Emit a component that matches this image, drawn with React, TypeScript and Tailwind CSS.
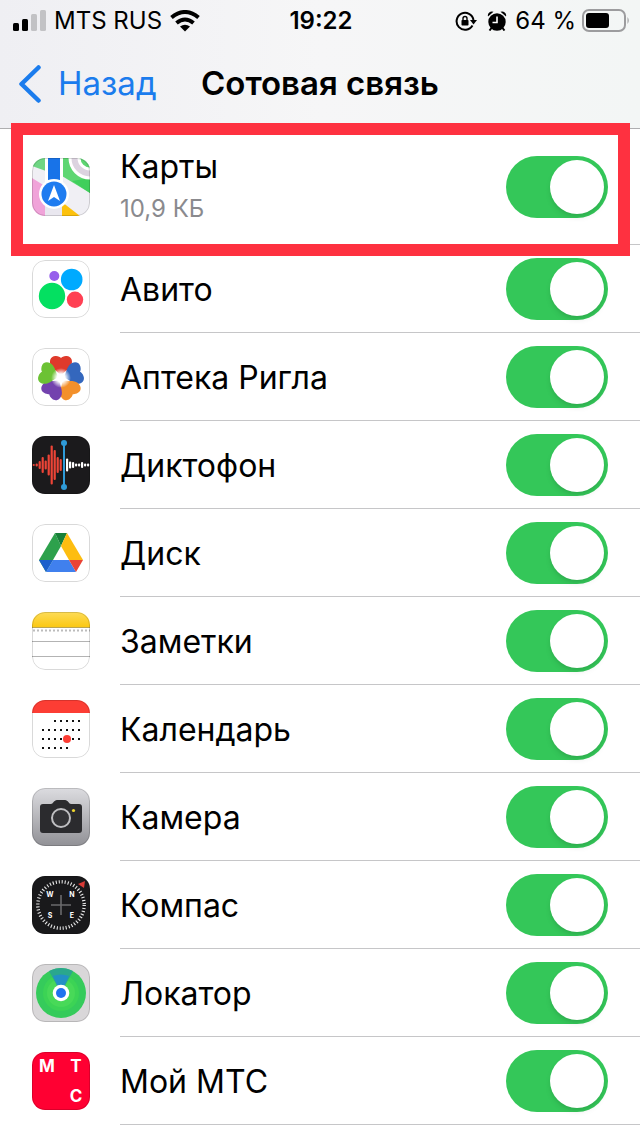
import React, { useState } from "react";

const MapsIcon = () => (
  <>
    <rect width="58" height="58" fill="#f0eff4" />
    <path d="M14 0V13L0 8V0z" fill="#6fd583" />
    <path d="M30 0H58V35L30 18z" fill="#5ed672" />
    <path d="M40 23L58 20V35z" fill="#3fcf5b" />
    <path d="M0 20L13 28V58H0z" fill="#f0a3d9" />
    <path d="M13 40H30V58H13z" fill="#e9e7ef" />
    <path d="M30 44L48 58H30z" fill="#fcc10d" />
    <circle cx="58" cy="0" r="20" fill="#dcd3e0" stroke="#fff" strokeWidth="3" />
    <circle cx="58" cy="0" r="11" fill="#5ed672" stroke="#fff" strokeWidth="3" />
    <path d="M13 0H31V28H13z" fill="#fff" />
    <path d="M16 0H28V26H16z" fill="#1873e8" />
    <circle cx="22" cy="36" r="15" fill="#fff" />
    <circle cx="22" cy="36" r="12.5" fill="#1f7cf0" />
    <path d="M22 27L28 43L22 39L16 43z" fill="#fff" />
  </>
);

const AvitoIcon = () => (
  <>
    <rect width="58" height="58" fill="#fff" />
    <circle cx="22.3" cy="16" r="5" fill="#965eeb" />
    <circle cx="39.7" cy="19.5" r="10.8" fill="#00aaff" />
    <circle cx="20" cy="36" r="13.2" fill="#04e061" />
    <circle cx="43" cy="39.7" r="8.2" fill="#ff4053" />
  </>
);

const petals = ["#df3a2b", "#3467bd", "#f3902b", "#7342ae", "#6cc234"];

const RiglaIcon = () => (
  <>
    <rect width="58" height="58" fill="#fff" />
    {petals.map((color, index) => (
      <path
        key={color}
        d="M0 -3C-3 -6 -7 -8 -9.5 -11.5C-13 -17 -10 -22.5 -5 -22C-2.500 -21.800 -1 -21 0 -20C1 -21 2.500 -21.800 5 -22C10 -22.5 13 -17 9.500 -11.500C7 -8 3 -6 0 -3z"
        fill={color}
        transform={`translate(29 30) rotate(${index * 72})`}
      />
    ))}
    <circle cx="29" cy="30" r="10" fill="url(#glow)" />
    <defs>
      <radialGradient id="glow">
        <stop offset="0.4" stopColor="#fff" />
        <stop offset="1" stopColor="#fff" stopOpacity="0" />
      </radialGradient>
    </defs>
  </>
);

const redBars = [2, 3, 8, 16, 9, 21, 39, 30, 16, 12];
const whiteBars = [13, 7, 6, 3, 3, 6, 3, 3];

const VoiceIcon = () => (
  <>
    <rect width="58" height="58" fill="#1b1a1c" />
    {redBars.map((h, i) => (
      <rect key={i} x={0.6 + i * 3} y={29 - h / 2} width="2.2" height={h} rx="1" fill="#ee4437" />
    ))}
    {whiteBars.map((h, i) => (
      <rect key={i} x={34 + i * 3} y={29 - h / 2} width="2.2" height={h} rx="1" fill="#fff" />
    ))}
    <path d="M32 7V51" stroke="#2f9bd8" strokeWidth="2" />
    <circle cx="32" cy="7" r="3" fill="#2f9bd8" />
    <circle cx="32" cy="51" r="3" fill="#2f9bd8" />
  </>
);

const DriveIcon = () => (
  <>
    <rect width="58" height="58" fill="#fff" />
    <path d="M23 9L29 22L21 36L14 48L7 36z" fill="#2da14c" />
    <path d="M23 9H35L29 22z" fill="#178038" />
    <path d="M35 9L51 36H37L29 22z" fill="#fdbd10" />
    <path d="M7 36H21L14 48z" fill="#1c5fcc" />
    <path d="M21 36H37L44 48H14z" fill="#4080ee" />
    <path d="M37 36H51L44 48z" fill="#ea4335" />
  </>
);

const NotesIcon = () => (
  <>
    <rect width="58" height="58" fill="#fff" />
    <rect width="58" height="15" fill="url(#notes)" />
    <path d="M0 15.5H58" stroke="#b9a553" />
    <path d="M1 18.5H58" stroke="#bcbcbc" strokeWidth="2" strokeDasharray="2 2" />
    <path d="M0 29.5H58M0 44.5H58" stroke="#b3b3b3" />
    <defs>
      <linearGradient id="notes" x2="0" y2="1">
        <stop stopColor="#fddc58" />
        <stop offset="1" stopColor="#fbc812" />
      </linearGradient>
    </defs>
  </>
);

const calendarRows = [
  { y: 21, from: 2, to: 6 },
  { y: 30, from: 0, to: 6 },
  { y: 39, from: 0, to: 6 },
  { y: 48, from: 0, to: 4 },
];

const CalendarIcon = () => (
  <>
    <rect width="58" height="58" fill="#fff" />
    <rect width="58" height="13" fill="#fc3d34" />
    {calendarRows.map((row) =>
      [0, 1, 2, 3, 4, 5, 6]
        .filter((col) => col >= row.from && col <= row.to)
        .map((col) => (
          <rect key={`${row.y}-${col}`} x={10 + col * 6} y={row.y - 1} width="2" height="2" fill="#111" />
        ))
    )}
    <circle cx="35" cy="39" r="4" fill="#fc3d34" />
  </>
);

const CameraIcon = () => (
  <>
    <rect width="58" height="58" fill="url(#camera)" />
    <path
      d="M11 16H19C21 16 22 12 25 12H33C36 12 37 16 39 16H47Q50 16 50 19V42Q50 45 47 45H11Q8 45 8 42V19Q8 16 11 16z"
      fill="#2b2b2e"
    />
    <circle cx="29" cy="30" r="9" fill="#343437" stroke="#bebec1" strokeWidth="2" />
    <circle cx="41.5" cy="22.5" r="1.6" fill="#eed52e" />
    <defs>
      <linearGradient id="camera" x2="0" y2="1">
        <stop stopColor="#dcdce0" />
        <stop offset="1" stopColor="#919196" />
      </linearGradient>
    </defs>
  </>
);

const CompassIcon = () => (
  <>
    <rect width="58" height="58" fill="#19191b" />
    <circle cx="29" cy="29" r="23.2" fill="none" stroke="#e5e5e5" strokeWidth="3.4" strokeDasharray="1.1 1.937" />
    <path d="M29 19V39M19 29H39" stroke="#6a6a6c" strokeWidth="1.6" />
    <path d="M53 5L52 12L46 8z" fill="#d93a36" />
    <g fill="#fff" fontSize="7" fontWeight="700" textAnchor="middle">
      <text x="18" y="21">W</text>
      <text x="40" y="21">N</text>
      <text x="18" y="42">S</text>
      <text x="40" y="42">E</text>
    </g>
  </>
);

const FindIcon = () => (
  <>
    <rect width="58" height="58" fill="#d9d7d9" />
    <circle cx="29" cy="29" r="25" fill="#35cb5b" />
    <circle cx="29" cy="29" r="18" fill="#3cd355" />
    <circle cx="29" cy="29" r="14" fill="#48d958" />
    <path d="M29 29L17 7Q29 1 41 7z" fill="#2aa78d" />
    <path d="M29 29L21 12Q29 9 37 12z" fill="#2290c5" />
    <circle cx="29" cy="29" r="8.3" fill="#fff" />
    <circle cx="29" cy="29" r="5" fill="#1f72ee" />
  </>
);

const MtsIcon = () => (
  <>
    <rect width="58" height="58" fill="#ff0032" />
    <g fill="#fff" fontSize="17" fontWeight="700" textAnchor="middle">
      <text x="15" y="20">М</text>
      <text x="44" y="20">Т</text>
      <text x="44" y="50">С</text>
    </g>
  </>
);

const apps = [
  { name: "Карты", usage: "10,9 КБ", icon: MapsIcon, highlighted: true },
  { name: "Авито", icon: AvitoIcon },
  { name: "Аптека Ригла", icon: RiglaIcon },
  { name: "Диктофон", icon: VoiceIcon },
  { name: "Диск", icon: DriveIcon },
  { name: "Заметки", icon: NotesIcon },
  { name: "Календарь", icon: CalendarIcon },
  { name: "Камера", icon: CameraIcon },
  { name: "Компас", icon: CompassIcon },
  { name: "Локатор", icon: FindIcon },
  { name: "Мой МТС", icon: MtsIcon },
];

const StatusBar = () => (
  <div className="grid grid-cols-[1fr_auto_1fr] items-center h-10 pt-0.5 pl-3 pr-2.5 text-2xl">
    <div className="flex items-center gap-2">
      <svg width="34" height="22" viewBox="0 0 34 22">
        <rect x="1" y="13" width="6" height="8" rx="1.5" />
        <rect x="10" y="9" width="6" height="12" rx="1.5" />
        <rect x="19" y="4" width="6" height="17" rx="1.5" fill="#c2c2c5" />
        <rect x="28" y="0" width="6" height="21" rx="1.5" fill="#c2c2c5" />
      </svg>
      <span>MTS RUS</span>
      <svg width="30" height="22" viewBox="0 0 30 22" fill="none" stroke="#000" strokeWidth="4">
        <path d="M1.500 7.500Q15 -3.500 28.500 7.500" />
        <path d="M6.500 13Q15 6 23.500 13" />
        <path d="M15 21.500L10 16.500Q15 13 20 16.500z" fill="#000" stroke="none" />
      </svg>
    </div>
    <span className="font-semibold">19:22</span>
    <div className="flex items-center justify-end">
      <svg className="mr-2.5" width="22" height="20" viewBox="0 0 22 20">
        <path d="M17.500 14.500A8.500 8.500 0 1 1 18.500 9" fill="none" stroke="#000" strokeWidth="2" />
        <path d="M15 9H22L18.500 13.500z" />
        <rect x="6.500" y="9" width="7" height="5.500" rx="0.800" />
        <path d="M8 9V7.500A2 2 0 0 1 12 7.500V9" fill="none" stroke="#000" strokeWidth="1.400" />
      </svg>
      <svg className="mr-2" width="20" height="20" viewBox="0 0 20 20">
        <circle cx="10" cy="11" r="8.700" />
        <path d="M1 5.500A4 4 0 0 1 6.500 0.800zM19 5.500A4 4 0 0 0 13.500 0.800z" />
        <path d="M4.500 17L2.500 19.500M15.500 17L17.500 19.500" stroke="#000" strokeWidth="2" />
        <path d="M10 5.500V11.500H5.500" fill="none" stroke="#fff" strokeWidth="1.600" />
      </svg>
      <span className="mr-1.5">64 %</span>
      <svg width="48" height="24" viewBox="0 0 48 24">
        <rect x="1" y="1" width="42" height="21" rx="6" fill="none" stroke="#9c9c9e" strokeWidth="2" />
        <rect x="4" y="4" width="23" height="15" rx="3" />
        <path d="M45.500 8V15Q48 11.500 45.500 8z" fill="#9c9c9e" />
      </svg>
    </div>
  </div>
);

const NavBar = () => (
  <nav className="grid grid-cols-[1fr_auto_1fr] items-center h-22 px-[19px] text-[33px]">
    <a href="#" className="flex items-center gap-4 text-[#1b7ced]">
      <svg width="23" height="38" viewBox="0 0 23 38" fill="none" stroke="currentColor">
        <path d="M19.500 2.500L2.500 19L19.500 35.500" strokeWidth="4.500" strokeLinecap="round" strokeLinejoin="round" />
      </svg>
      Назад
    </a>
    <h1 className="font-semibold">Сотовая связь</h1>
  </nav>
);

const AppRow = ({ name, usage, icon: Icon, highlighted }: (typeof apps)[number]) => {
  const [enabled, setEnabled] = useState(true);

  return (
    <li className="relative">
      <label className="flex items-center pl-8">
        <svg
          className="shrink-0 size-[58px] rounded-[13px] mr-[30px]"
          viewBox="0 0 58 58"
          aria-hidden="true"
        >
          <Icon />
          <rect x="0.500" y="0.500" width="57" height="57" rx="12.500" fill="none" stroke="#000" strokeOpacity="0.15" />
        </svg>
        <span
          className={`flex flex-1 items-center justify-between border-b border-[#c6c6c8] pr-8 ${
            usage ? "h-29" : "h-22"
          }`}
        >
          <span className="flex flex-col gap-0.5 pt-0.5">
            <span className="text-[32px] leading-10">{name}</span>
            {usage && <span className="text-2xl leading-10 text-[#8a8a8e]">{usage}</span>}
          </span>
          <input
            type="checkbox"
            role="switch"
            checked={enabled}
            onChange={() => setEnabled(!enabled)}
            className="appearance-none w-[102px] h-[62px] p-1 rounded-full bg-gray-200 checked:bg-[#34c759] before:block before:size-[54px] before:rounded-full before:bg-white before:shadow-md checked:before:ml-10"
          />
        </span>
      </label>
      {highlighted && (
        <div className="absolute z-10 -top-1.5 left-[11px] right-2.5 -bottom-[11px] border-12 border-[#fe3140] pointer-events-none" />
      )}
    </li>
  );
};

export const App = () => {
  return (
    <div className="min-h-screen bg-white text-black font-['Inter','Liberation_Sans',sans-serif]">
      <header className="bg-linear-to-r from-[#efeff3] via-[#f6f6f7] to-[#f3f6f5] border-b border-[#aeaeb0]">
        <StatusBar />
        <NavBar />
      </header>
      <ul>
        {apps.map((app) => (
          <AppRow key={app.name} {...app} />
        ))}
      </ul>
    </div>
  );
};

export default App;
